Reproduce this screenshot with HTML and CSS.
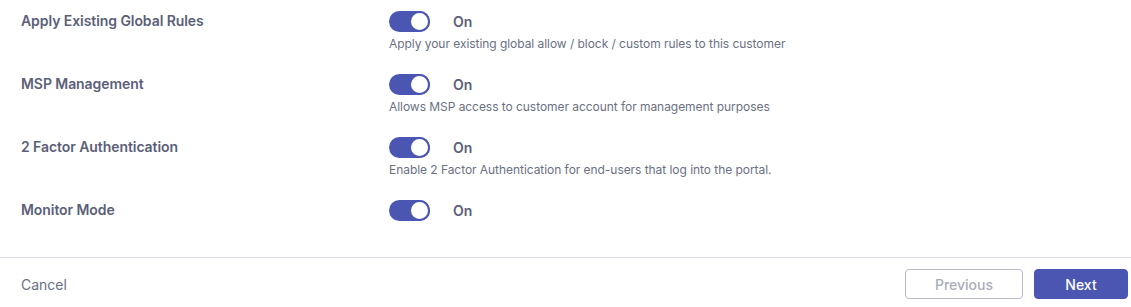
FILE: index.html
```html
<!DOCTYPE html>
<html lang="en">
<head>
    <meta charset="UTF-8">
    <meta name="viewport" content="width=device-width, initial-scale=1.0">
    <title>Customer Settings</title>
    <link rel="stylesheet" href="styles.css">
</head>
<body>
    <div class="settings">
        <div class="setting-row">
            <div class="setting-label">Apply Existing Global Rules</div>
            <div class="setting-control">
                <div class="toggle-line">
                    <span class="toggle on"><span class="knob"></span></span>
                    <span class="toggle-text">On</span>
                </div>
                <p class="hint">Apply your existing global allow / block / custom rules to this customer</p>
            </div>
        </div>
        <div class="setting-row">
            <div class="setting-label">MSP Management</div>
            <div class="setting-control">
                <div class="toggle-line">
                    <span class="toggle on"><span class="knob"></span></span>
                    <span class="toggle-text">On</span>
                </div>
                <p class="hint">Allows MSP access to customer account for management purposes</p>
            </div>
        </div>
        <div class="setting-row">
            <div class="setting-label">2 Factor Authentication</div>
            <div class="setting-control">
                <div class="toggle-line">
                    <span class="toggle on"><span class="knob"></span></span>
                    <span class="toggle-text">On</span>
                </div>
                <p class="hint">Enable 2 Factor Authentication for end-users that log into the portal.</p>
            </div>
        </div>
        <div class="setting-row">
            <div class="setting-label">Monitor Mode</div>
            <div class="setting-control">
                <div class="toggle-line">
                    <span class="toggle on"><span class="knob"></span></span>
                    <span class="toggle-text">On</span>
                </div>
            </div>
        </div>
    </div>

    <div class="footer">
        <button class="btn-link" type="button">Cancel</button>
        <div class="footer-actions">
            <button class="btn btn-outline" type="button" disabled>Previous</button>
            <button class="btn btn-primary" type="button">Next</button>
        </div>
    </div>
</body>
</html>
```

FILE: styles.css
```css
* {
    box-sizing: border-box;
    margin: 0;
    padding: 0;
}

body {
    width: 1131px;
    height: 307px;
    background-color: #fff;
    font-family: Inter, 'Noto Sans', sans-serif;
    color: #5b6078;
    overflow: hidden;
}

.settings {
    padding: 11px 0 0 21px;
    height: 257px;
}

.setting-row {
    display: grid;
    grid-template-columns: 368px 1fr;
    margin-bottom: 22px;
}

.setting-label {
    font-size: 14px;
    font-weight: 600;
    line-height: 19px;
    letter-spacing: -0.07px;
    color: #5b6078;
}

.toggle-line {
    display: flex;
    align-items: center;
    height: 21px;
}

.toggle {
    position: relative;
    display: inline-block;
    width: 41px;
    height: 21px;
    border-radius: 11px;
    background-color: #4b56b3;
}

.knob {
    position: absolute;
    top: 0;
    right: 0;
    width: 21px;
    height: 21px;
    border-radius: 50%;
    background-color: #fff;
    border: 2px solid #4b56b3;
}

.toggle-text {
    margin-left: 23px;
    font-size: 14px;
    font-weight: 600;
    color: #5b6078;
}

.hint {
    margin-top: 4px;
    font-size: 12px;
    line-height: 16px;
    letter-spacing: -0.05px;
    color: #6b7082;
}

.footer {
    display: flex;
    justify-content: space-between;
    align-items: center;
    border-top: 1px solid #dcdfe8;
    padding: 11px 3px 0 21px;
}

.footer-actions {
    display: flex;
    gap: 11px;
}

.btn-link {
    background: none;
    border: none;
    font-family: inherit;
    font-size: 14px;
    color: #6b7082;
    cursor: pointer;
}

.btn {
    height: 30px;
    border-radius: 4px;
    font-family: inherit;
    font-size: 14px;
    font-weight: 500;
    cursor: pointer;
}

.btn-outline {
    width: 118px;
    background-color: #fff;
    border: 1px solid #b9bcc8;
    color: #a9acba;
}

.btn-primary {
    width: 94px;
    background-color: #4b56b3;
    border: 1px solid #4b56b3;
    color: #fff;
}
```
